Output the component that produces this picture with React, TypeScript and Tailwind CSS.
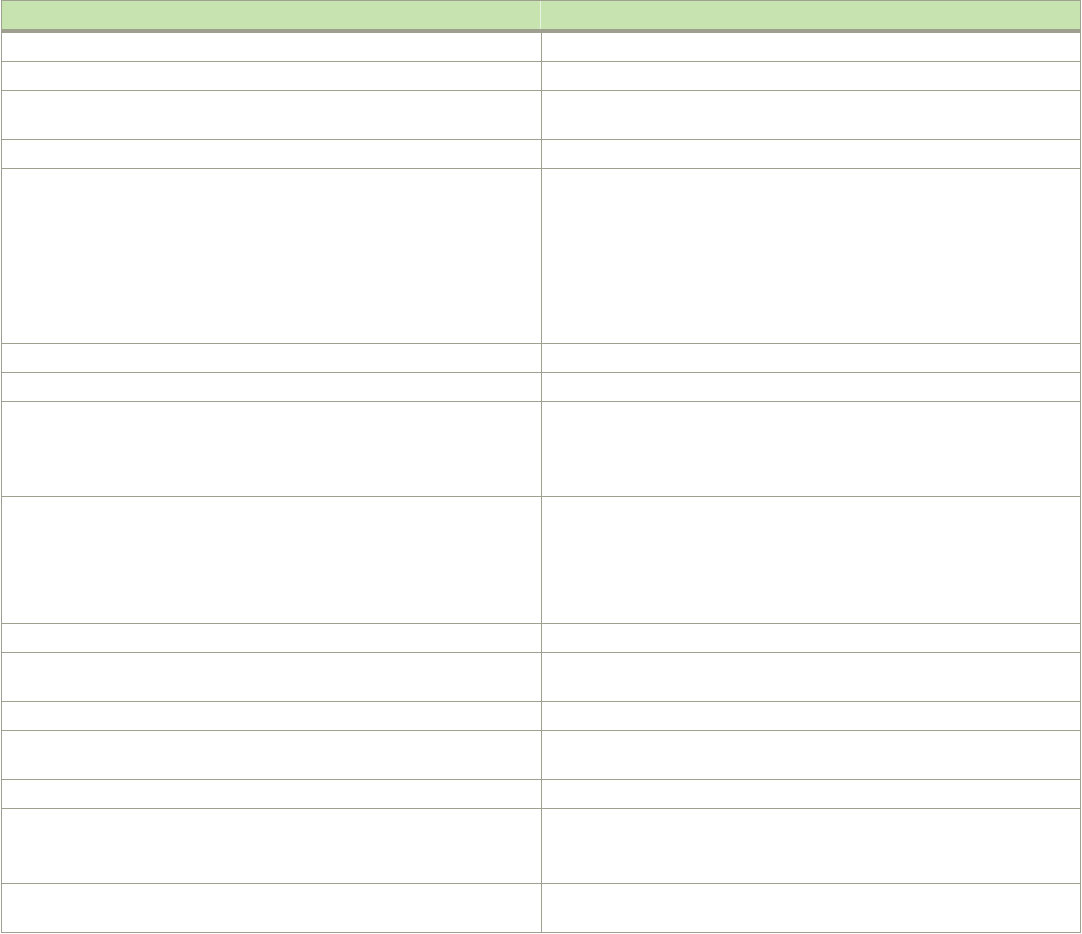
import React from "react";

const rows: number[] = [28, 28, 48, 28, 174, 28, 28, 94, 126, 28, 48, 28, 48, 28, 74, 48];

export default function App() {
  return (
    <div className="min-h-screen bg-white pl-[1px] font-['Liberation_Sans',sans-serif]">
      <div className="flex w-[1080px] flex-col border border-[#a0a091]">
        <div className="flex h-[28px] bg-[#c7e3af]">
          <div className="w-[538px]" />
          <div className="w-px bg-[#eaf3e2]" />
          <div className="flex-1" />
        </div>
        <div className="h-[4px] bg-[#9f9f8f]" />
        {rows.map((h, i) => {
          const last = i === rows.length - 1;
          return (
            <div
              key={i}
              className={last ? "flex" : "flex border-b border-[#a0a091]"}
              style={{ height: last ? h : h + 1 }}
            >
              <div className="w-[540px] border-r border-[#a0a091]" />
              <div className="flex-1" />
            </div>
          );
        })}
      </div>
    </div>
  );
}
